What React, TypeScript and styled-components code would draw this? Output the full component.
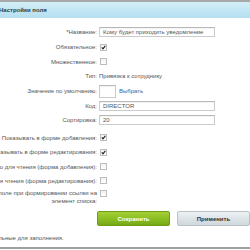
import { Fragment } from 'react';
import styled, { createGlobalStyle } from 'styled-components';

const GlobalStyle = createGlobalStyle`
  html, body {
    margin: 0;
    padding: 0;
    background: #fff;
    overflow: hidden;
  }
  body {
    width: 250px;
    height: 250px;
    font-family: "Liberation Sans", Arial, sans-serif;
  }
`;

const Frame = styled.div`
  width: 250px;
  height: 250px;
  display: flex;
  flex-direction: column;
  border-top: 2px solid #a8a8a8;
  box-sizing: border-box;
  position: relative;
  overflow: hidden;
`;

const Page = styled.div`
  margin-left: -60px;
  width: 310px;
  display: flex;
  flex-direction: column;
  flex: 1;
`;

const Header = styled.div`
  height: 16px;
  display: flex;
  align-items: center;
  padding-left: 59px;
  background: linear-gradient(to bottom, #d4eef8 0%, #c2e6f4 50%, #b4dff0 100%);
  font-weight: bold;
  font-size: 6px;
  color: #2f3a40;
`;

const Form = styled.div`
  display: grid;
  grid-template-columns: 157px 1fr;
  column-gap: 2px;
  padding-top: 7px;
  font-size: 6px;
  color: #555;
`;

const Label = styled.div<{ $h?: number }>`
  height: ${p => p.$h ?? 14.7}px;
  display: flex;
  align-items: center;
  justify-content: flex-end;
  text-align: right;
  white-space: nowrap;
  line-height: 8px;
`;

const Value = styled.div<{ $h?: number; $top?: boolean }>`
  height: ${p => p.$h ?? 14.7}px;
  display: flex;
  align-items: ${p => (p.$top ? 'flex-start' : 'center')};
  padding-top: ${p => (p.$top ? 2 : 0)}px;
  box-sizing: border-box;
  gap: 3px;
  color: #555;
`;

const Spacer = styled.div`
  grid-column: 1 / 3;
  height: 3px;
`;

const TextInput = styled.div<{ $w?: number; $h?: number }>`
  width: ${p => p.$w ?? 116}px;
  height: ${p => p.$h ?? 10}px;
  box-sizing: border-box;
  border: 1px solid #cbcbcb;
  border-top-color: #b8b8b8;
  box-shadow: inset 0 1px 1px rgba(0, 0, 0, 0.05);
  background: #fff;
  display: flex;
  align-items: center;
  padding-left: 3px;
  font-size: 6px;
  color: #555;
  white-space: nowrap;
  overflow: hidden;
`;

const Box = styled.div`
  width: 5px;
  height: 5px;
  margin-left: 1px;
  border: 1px solid #bdbdbd;
  background: linear-gradient(#f2f2f2, #fff);
  position: relative;
`;

const Check = styled.svg`
  position: absolute;
  left: 0;
  top: 0;
`;

const Link = styled.span`
  color: #2a6aa8;
  font-size: 6px;
`;

const ButtonRow = styled.div`
  display: flex;
  gap: 7px;
  padding-left: 157px;
  margin-top: 6px;
`;

const Button = styled.div<{ $primary?: boolean }>`
  width: 73px;
  height: 15px;
  box-sizing: border-box;
  border-radius: 2px;
  display: flex;
  align-items: center;
  justify-content: center;
  font-size: 6px;
  font-weight: bold;
  color: ${p => (p.$primary ? '#fff' : '#333')};
  border: 1px solid ${p => (p.$primary ? '#6e9c14' : '#b8c2c6')};
  background: ${p =>
    p.$primary
      ? 'linear-gradient(to bottom, #a4cf38 0%, #8cbf22 50%, #76a916 100%)'
      : 'linear-gradient(to bottom, #eef2f4 0%, #dde4e7 50%, #cfd8dc 100%)'};
`;

const Footer = styled.div`
  margin-top: 7px;
  padding-left: 29px;
  font-size: 6px;
  color: #555;
  height: 10px;
  display: flex;
  align-items: center;
  white-space: nowrap;
`;

const BottomLine = styled.div`
  position: absolute;
  left: 0;
  right: 0;
  bottom: 1px;
  height: 2px;
  background: #a0a0a0;
`;

const CheckBox = ({ checked }: { checked?: boolean }) => (
  <Box>
    {checked && (
      <Check width="5" height="5" viewBox="0 0 5 5">
        <path d="M0.8 2.4 L2 3.8 L4.3 0.9" stroke="#1a1a1a" strokeWidth="1.1" fill="none" />
      </Check>
    )}
  </Box>
);

type Row = { label: React.ReactNode; value: React.ReactNode; h?: number; top?: boolean };

const topRows: Row[] = [
  { label: '*Название:', value: <TextInput>Кому будет приходить уведомление</TextInput> },
  { label: 'Обязательное:', value: <CheckBox checked /> },
  { label: 'Множественное:', value: <CheckBox /> },
  { label: 'Тип:', value: 'Привязка к сотруднику' },
  {
    label: 'Значение по умолчанию:',
    value: (
      <>
        <TextInput $w={17} $h={13} />
        <Link>Выбрать</Link>
      </>
    ),
  },
  { label: 'Код:', value: <TextInput>DIRECTOR</TextInput> },
  { label: 'Сортировка:', value: <TextInput>20</TextInput> },
];

const bottomRows: Row[] = [
  { label: 'Показывать в форме добавления:', value: <CheckBox checked />, h: 14.3 },
  { label: 'Показывать в форме редактирования:', value: <CheckBox checked />, h: 14.3 },
  { label: 'Только для чтения (форма добавления):', value: <CheckBox />, h: 14.3 },
  { label: 'Только для чтения (форма редактирования):', value: <CheckBox />, h: 14.3 },
  {
    label: (
      <span>
        Использовать это поле при формировании ссылки на
        <br />
        элемент списка:
      </span>
    ),
    value: <CheckBox />,
    h: 17,
    top: true,
  },
];

export default function App() {
  return (
    <>
      <GlobalStyle />
      <Frame>
        <Page>
          <Header>Настройки поля</Header>
          <Form>
            {topRows.map((r, i) => (
              <Fragment key={'t' + i}>
                <Label $h={r.h}>{r.label}</Label>
                <Value $h={r.h} $top={r.top}>{r.value}</Value>
              </Fragment>
            ))}
            <Spacer />
            {bottomRows.map((r, i) => (
              <Fragment key={'b' + i}>
                <Label $h={r.h}>{r.label}</Label>
                <Value $h={r.h} $top={r.top}>{r.value}</Value>
              </Fragment>
            ))}
          </Form>
          <ButtonRow>
            <Button $primary>Сохранить</Button>
            <Button>Применить</Button>
          </ButtonRow>
          <Footer>* - обязательные для заполнения.</Footer>
        </Page>
        <BottomLine />
      </Frame>
    </>
  );
}
